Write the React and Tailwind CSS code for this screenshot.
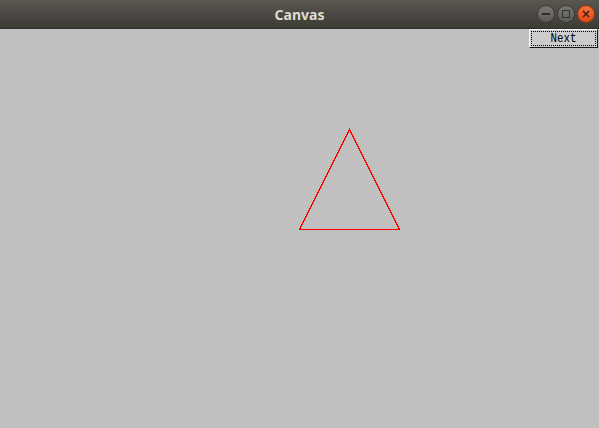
export default function App() {
  return (
    <div className="w-[599px] h-[428px] flex flex-col bg-[#c0c0c0] overflow-hidden">
      <div className="h-[29px] shrink-0 relative flex items-center justify-center bg-gradient-to-b from-[#5a5751] to-[#3d3b36] border-b border-[#2e2d2a]">
        <span className="text-[14px] font-bold text-[#dfdbd2]" style={{ fontFamily: '"Noto Sans", "Open Sans", sans-serif' }}>Canvas</span>
        <div className="absolute right-[4px] top-[5px] flex gap-[2px]">
          <div className="w-[18px] h-[18px] rounded-full bg-gradient-to-b from-[#7a7873] to-[#5c5a55] border border-[#3a3935] flex items-center justify-center">
            <div className="w-[8px] h-[1.5px] bg-[#2f2e2b]" />
          </div>
          <div className="w-[18px] h-[18px] rounded-full bg-gradient-to-b from-[#7a7873] to-[#5c5a55] border border-[#3a3935] flex items-center justify-center">
            <div className="w-[8px] h-[8px] border border-[#2f2e2b]" />
          </div>
          <div className="w-[18px] h-[18px] rounded-full bg-gradient-to-b from-[#f2713c] to-[#df4a16] border border-[#8e3412] flex items-center justify-center">
            <svg width="8" height="8" viewBox="0 0 8 8"><path d="M1 1L7 7M7 1L1 7" stroke="#3b1a0c" strokeWidth="1.4" /></svg>
          </div>
        </div>
      </div>
      <div className="relative flex-1">
        <svg className="absolute inset-0" width="599" height="399" viewBox="0 0 599 399">
          <polygon points="349.5,100.5 299.5,200.5 399.5,200.5" fill="none" stroke="#ff0000" strokeWidth="1" shapeRendering="crispEdges" />
        </svg>
        <div className="relative flex justify-end pr-[1px]">
          <div className="w-[69px] h-[19px] bg-[#cccccc] border border-t-white border-l-white border-r-[#1a1a1a] border-b-[#1a1a1a] p-[1px]">
            <div className="w-full h-full border border-dotted border-black flex items-center justify-center text-[12px] leading-none text-black" style={{ fontFamily: '"Liberation Mono", monospace' }}>
              <span className="inline-block scale-x-90">Next</span>
            </div>
          </div>
        </div>
      </div>
    </div>
  );
}
